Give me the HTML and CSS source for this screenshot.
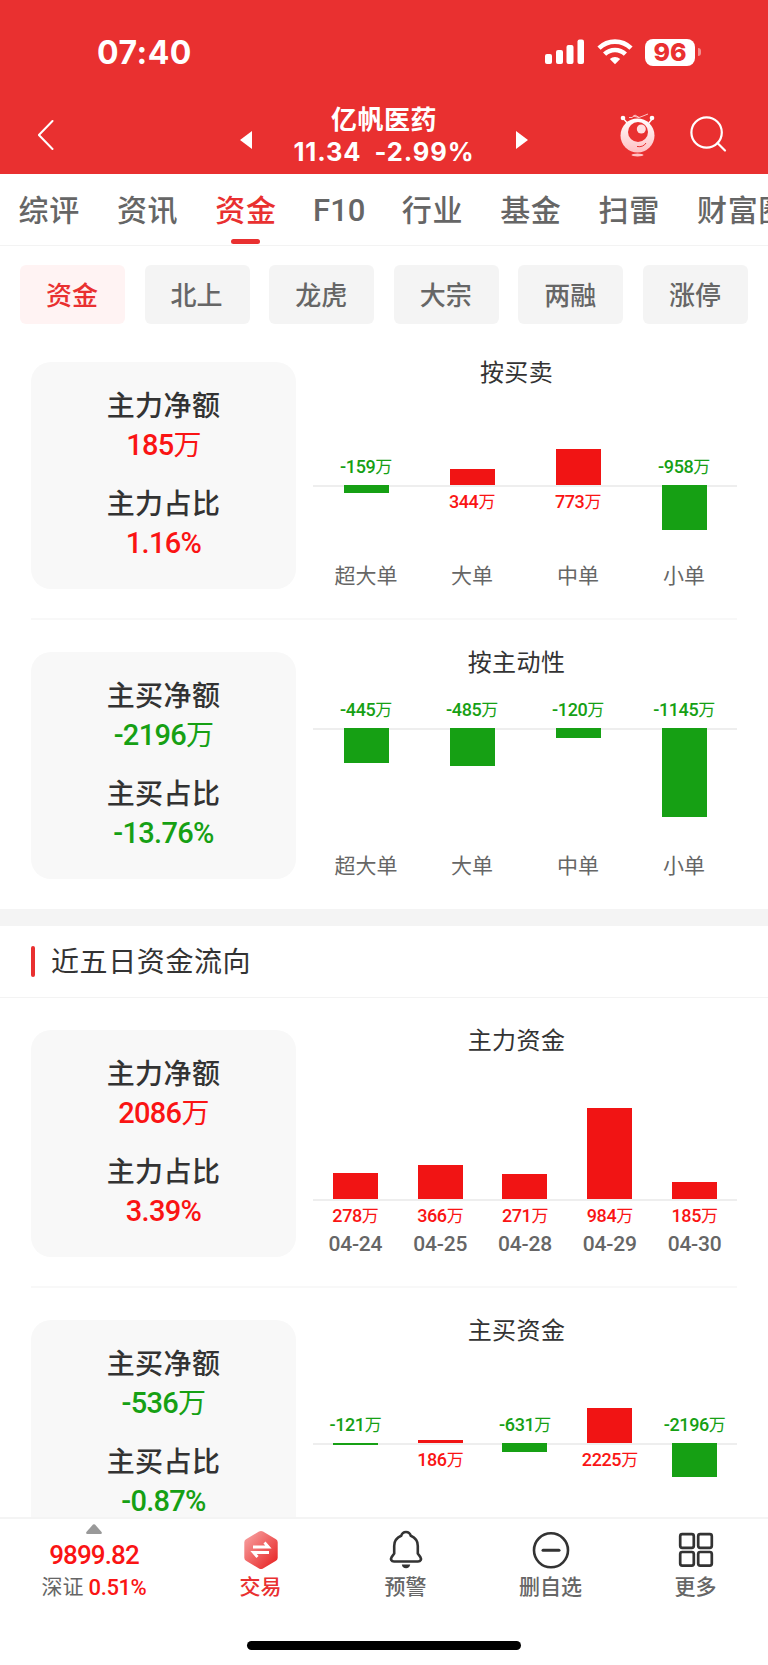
FILE: index.html
```
<!DOCTYPE html>
<html lang="zh-CN">
<head>
    <meta charset="UTF-8">
    <meta name="viewport" content="width=device-width, initial-scale=1.0">
    <title>亿帆医药 - 资金</title>
    <link rel="stylesheet" href="styles.css">
</head>
<body>
<div class="app">

    <header class="header">
        <div class="status">
            <span class="time">07:40</span>
            <div class="status-icons">
                <svg width="40" height="26" viewBox="0 0 40 26" fill="#fff">
                    <rect x="0" y="15" width="7" height="10" rx="2"/>
                    <rect x="11" y="11" width="7" height="14" rx="2"/>
                    <rect x="21.5" y="6" width="7" height="19" rx="2"/>
                    <rect x="32.5" y="0.5" width="6.5" height="24.5" rx="2"/>
                </svg>
                <svg class="wifi" width="36" height="26" viewBox="0 0 36 26" fill="none" stroke="#fff" stroke-width="4.6">
                    <path d="M2 9.2C11 .4 25 .4 34 9.2"/>
                    <path d="M7.6 15.2c5.8-5.6 15-5.6 20.8 0"/>
                    <path d="M12.8 20c3-2.8 7.4-2.8 10.4 0L18 25.2z" fill="#fff" stroke="none"/>
                </svg>
                <span class="battery">96</span>
                <span class="battery-tip"></span>
            </div>
        </div>
        <div class="nav">
            <svg class="back" width="18" height="32" viewBox="0 0 18 32" fill="none" stroke="#fff" stroke-width="2" stroke-linecap="round" stroke-linejoin="round"><path d="M14.5 2 .9 16 14.5 30"/></svg>
            <svg class="arrow" width="12" height="18" viewBox="0 0 12 18" fill="#fff"><path d="M12 0v18L0 9z"/></svg>
            <div class="stock">
                <h1>亿帆医药</h1>
                <p><span>11.34</span><span>-2.99%</span></p>
            </div>
            <svg class="arrow" width="12" height="18" viewBox="0 0 12 18" fill="#fff"><path d="M0 0v18l12-9z"/></svg>
            <svg class="robot" width="36" height="44" viewBox="0 0 36 44">
                <defs>
                    <linearGradient id="ball" x1="0" y1="0" x2="0" y2="1">
                        <stop offset="0" stop-color="#fff"/>
                        <stop offset="1" stop-color="#ffbfc2"/>
                    </linearGradient>
                </defs>
                <path d="M3 5l5 6M33 5l-5 6" stroke="#fff" stroke-width="1.3"/>
                <path d="M9 4.5h3l3-2.5 4 2.5 4-1.5 5-2M13 3l6 1.5" fill="none" stroke="#ffd5d6" stroke-width=".9"/>
                <circle cx="3" cy="5" r="2.3" fill="#fff"/>
                <circle cx="32" cy="5" r="2.3" fill="#fff"/>
                <circle cx="17.5" cy="22.5" r="17" fill="url(#ball)"/>
                <circle cx="18" cy="19" r="10" fill="#e93030"/>
                <circle cx="21.3" cy="16" r="4.5" fill="#ffdfe0"/>
                <path d="M17 33.5c4 .8 7.3-.6 9-3.5" fill="none" stroke="#e93030" stroke-width="1"/>
                <ellipse cx="17.5" cy="42" rx="6" ry="1.5" fill="#ffc3c5"/>
            </svg>
            <svg class="search" width="38" height="38" viewBox="0 0 38 38" fill="none" stroke="#fff" stroke-width="2.2" stroke-linecap="round"><circle cx="16.6" cy="16.5" r="15.2"/><path d="M27.5 27 35 34.5"/></svg>
        </div>
    </header>

    <nav class="tabs">
        <a>综评</a>
        <a>资讯</a>
        <a class="active">资金</a>
        <a class="latin">F10</a>
        <a>行业</a>
        <a>基金</a>
        <a>扫雷</a>
        <a>财富圈</a>
    </nav>

    <div class="pills">
        <a class="active">资金</a>
        <a>北上</a>
        <a>龙虎</a>
        <a>大宗</a>
        <a>两融</a>
        <a>涨停</a>
    </div>

    <main class="content">
        <section class="block">
            <div class="card">
                <h3>主力净额</h3>
                <p class="red">185<i>万</i></p>
                <h3>主力占比</h3>
                <p class="red">1.16%</p>
            </div>
            <div class="chart axis-mid">
                <h2>按买卖</h2>
                <div class="plot">
                    <div class="col green"><div class="up"><b>-159<i>万</i></b></div><div class="down"><span class="bar" style="height:7.5px"></span></div></div>
                    <div class="col red"><div class="up"><span class="bar" style="height:16px"></span></div><div class="down"><b>344<i>万</i></b></div></div>
                    <div class="col red"><div class="up"><span class="bar" style="height:36px"></span></div><div class="down"><b>773<i>万</i></b></div></div>
                    <div class="col green"><div class="up"><b>-958<i>万</i></b></div><div class="down"><span class="bar" style="height:44.5px"></span></div></div>
                </div>
                <div class="labels"><span>超大单</span><span>大单</span><span>中单</span><span>小单</span></div>
            </div>
        </section>

        <section class="block">
            <div class="card">
                <h3>主买净额</h3>
                <p class="green">-2196<i>万</i></p>
                <h3>主买占比</h3>
                <p class="green">-13.76%</p>
            </div>
            <div class="chart axis-top">
                <h2>按主动性</h2>
                <div class="plot">
                    <div class="col green"><div class="up"><b>-445<i>万</i></b></div><div class="down"><span class="bar" style="height:34.5px"></span></div></div>
                    <div class="col green"><div class="up"><b>-485<i>万</i></b></div><div class="down"><span class="bar" style="height:37.5px"></span></div></div>
                    <div class="col green"><div class="up"><b>-120<i>万</i></b></div><div class="down"><span class="bar" style="height:9.5px"></span></div></div>
                    <div class="col green"><div class="up"><b>-1145<i>万</i></b></div><div class="down"><span class="bar" style="height:88.5px"></span></div></div>
                </div>
                <div class="labels"><span>超大单</span><span>大单</span><span>中单</span><span>小单</span></div>
            </div>
        </section>

        <div class="section-title"><h2>近五日资金流向</h2></div>

        <section class="block">
            <div class="card">
                <h3>主力净额</h3>
                <p class="red">2086<i>万</i></p>
                <h3>主力占比</h3>
                <p class="red">3.39%</p>
            </div>
            <div class="chart axis-bottom">
                <h2>主力资金</h2>
                <div class="plot">
                    <div class="col red"><div class="up"><span class="bar" style="height:26px"></span></div><div class="down"><b>278<i>万</i></b></div></div>
                    <div class="col red"><div class="up"><span class="bar" style="height:34.5px"></span></div><div class="down"><b>366<i>万</i></b></div></div>
                    <div class="col red"><div class="up"><span class="bar" style="height:25.5px"></span></div><div class="down"><b>271<i>万</i></b></div></div>
                    <div class="col red"><div class="up"><span class="bar" style="height:91.5px"></span></div><div class="down"><b>984<i>万</i></b></div></div>
                    <div class="col red"><div class="up"><span class="bar" style="height:17.5px"></span></div><div class="down"><b>185<i>万</i></b></div></div>
                </div>
                <div class="labels dates"><span>04-24</span><span>04-25</span><span>04-28</span><span>04-29</span><span>04-30</span></div>
            </div>
        </section>

        <section class="block">
            <div class="card">
                <h3>主买净额</h3>
                <p class="green">-536<i>万</i></p>
                <h3>主买占比</h3>
                <p class="green">-0.87%</p>
            </div>
            <div class="chart axis-center">
                <h2>主买资金</h2>
                <div class="plot">
                    <div class="col green"><div class="up"><b>-121<i>万</i></b></div><div class="down"><span class="bar" style="height:2px"></span></div></div>
                    <div class="col red"><div class="up"><span class="bar" style="height:3px"></span></div><div class="down"><b>186<i>万</i></b></div></div>
                    <div class="col green"><div class="up"><b>-631<i>万</i></b></div><div class="down"><span class="bar" style="height:9.7px"></span></div></div>
                    <div class="col red"><div class="up"><span class="bar" style="height:34.7px"></span></div><div class="down"><b>2225<i>万</i></b></div></div>
                    <div class="col green"><div class="up"><b>-2196<i>万</i></b></div><div class="down"><span class="bar" style="height:34px"></span></div></div>
                </div>
            </div>
        </section>
    </main>

    <footer class="bottom">
        <div class="bottom-row">
            <div class="index">
                <svg width="16" height="10" viewBox="0 0 16 10" fill="#999"><path d="M7 .6q1-.9 2 0L15.6 8q.8 2-1 2H1.4q-1.8 0-1-2z"/></svg>
                <strong>9899.82</strong>
                <p>深证<em>0.51%</em></p>
            </div>
            <a class="trade">
                <svg width="40" height="40" viewBox="0 0 40 40">
                    <defs>
                        <linearGradient id="hex" x1="0" y1="0" x2="1" y2="1">
                            <stop offset="0" stop-color="#f8a9a9"/>
                            <stop offset="0.85" stop-color="#e93030"/>
                        </linearGradient>
                    </defs>
                    <path d="M18 1.6q2-1.2 4 0l13 7.6q1.7 1 1.7 3v15.6q0 2-1.7 3l-13 7.6q-2 1.2-4 0L5 30.8q-1.7-1-1.7-3V12.2q0-2 1.7-3z" fill="url(#hex)"/>
                    <path d="M12 17h15.5L23.5 12.500M28 22.500H12.500L16.500 27" fill="none" stroke="#fff" stroke-width="2.8"/>
                </svg>
                <span>交易</span>
            </a>
            <a>
                <svg width="40" height="40" viewBox="0 0 40 40" fill="none" stroke="#333" stroke-width="2.6" stroke-linejoin="round">
                    <path d="M20 2c-2.8 0-4.2 1.8-4.8 3.8C10.500 7.800 8.200 11.500 8.200 16v7.500L5.700 27c-1.500 2.500-.3 4.500 2.300 4.500h24c2.600 0 3.800-2 2.300-4.500l-2.500-3.500V16c0-4.500-2.300-8.200-7-10.200C24.200 3.800 22.800 2 20 2z"/>
                    <path d="M15.800 34.500h8.400c-.5 2.600-1.800 3.700-4.200 3.700s-3.700-1.100-4.200-3.700z" fill="#333" stroke="none"/>
                </svg>
                <span>预警</span>
            </a>
            <a>
                <svg width="40" height="40" viewBox="0 0 40 40" fill="none" stroke="#333" stroke-width="2.6" stroke-linecap="round"><circle cx="20" cy="20.3" r="17"/><path d="M12 20.3h16" stroke-width="3"/></svg>
                <span>删自选</span>
            </a>
            <a>
                <svg width="40" height="40" viewBox="0 0 40 40" fill="none" stroke="#333" stroke-width="2.7">
                    <rect x="4.2" y="4.2" width="13.6" height="13.6" rx="2"/>
                    <rect x="22.2" y="4.2" width="13.6" height="13.6" rx="2"/>
                    <rect x="4.2" y="22" width="13.6" height="13.6" rx="2"/>
                    <rect x="22.2" y="22" width="13.6" height="13.6" rx="2"/>
                </svg>
                <span>更多</span>
            </a>
        </div>
        <div class="home-bar"></div>
    </footer>

</div>
</body>
</html>
```
FILE: styles.css
```
* {
    box-sizing: border-box;
    margin: 0;
    padding: 0;
}
body {
    font-family: Roboto, "Noto Sans CJK SC", sans-serif;
    background-color: #fff;
    color: #333;
}
i, em {
    font-style: normal;
}
svg {
    display: block;
    flex-shrink: 0;
}
.red {
    color: #fa1414;
}
.green {
    color: #16a014;
}
.app {
    display: flex;
    flex-direction: column;
    width: 768px;
    height: 1665px;
    overflow: hidden;
}

/* header */
.header {
    flex: none;
    height: 174px;
    background-color: #e93030;
    color: #fff;
}
.status {
    display: flex;
    justify-content: space-between;
    align-items: center;
    height: 104px;
    padding: 0 67px 0 97px;
    font-family: Inter, sans-serif;
}
.time {
    font-size: 32px;
    font-weight: 700;
    letter-spacing: 0.5px;
}
.status-icons {
    display: flex;
    align-items: center;
}
.wifi {
    margin-left: 12px;
}
.battery {
    width: 50px;
    height: 27px;
    margin-left: 12px;
    border-radius: 8px;
    background-color: #fff;
    color: #e93030;
    font-size: 25px;
    font-weight: 800;
    line-height: 27px;
    text-align: center;
}
.battery-tip {
    width: 3px;
    height: 8px;
    margin-left: 3px;
    border-radius: 0 4px 4px 0;
    background-color: #f29090;
}
.nav {
    display: grid;
    grid-template-columns: 202px 12px 264px 12px 91px 71px 38px;
    height: 70px;
    padding-left: 38px;
}
.back {
    margin-top: 15px;
}
.arrow {
    margin-top: 27px;
}
.stock {
    text-align: center;
}
.stock h1 {
    font-size: 26px;
    font-weight: 700;
    line-height: 32px;
    letter-spacing: 0.5px;
}
.stock p {
    display: flex;
    justify-content: center;
    gap: 13px;
    font-family: Inter, sans-serif;
    font-size: 25.5px;
    font-weight: 700;
    line-height: 31px;
    letter-spacing: 0.9px;
}
.robot {
    grid-column: 6;
    margin: 9px 0 0 1px;
}
.search {
    grid-column: 7;
    margin-top: 12px;
}

/* tabs */
.tabs {
    display: flex;
    flex: none;
    gap: 37px;
    height: 72px;
    padding-left: 18.5px;
    border-bottom: 1px solid #f3f3f3;
    overflow: hidden;
}
.tabs a {
    display: flex;
    flex-direction: column;
    align-items: center;
    flex: none;
    color: #666;
    font-size: 30px;
    font-weight: 500;
    line-height: 74px;
    letter-spacing: 0.7px;
}
.tabs .latin {
    width: 51px;
    font-size: 31px;
    letter-spacing: 0;
}
.tabs .active {
    color: #e93030;
}
.tabs .active::after {
    content: "";
    width: 29px;
    height: 5px;
    margin: -9px 1px 0 0;
    border-radius: 3px;
    background-color: #e93030;
}
.pills {
    display: grid;
    flex: none;
    grid-template-columns: repeat(6, 105px);
    gap: 19.6px;
    padding: 19px 20px 28px;
}
.pills a {
    height: 59px;
    padding-right: 1px;
    border-radius: 6px;
    background-color: #f4f4f4;
    color: #666;
    font-size: 26px;
    font-weight: 500;
    line-height: 62px;
    text-align: center;
}
.pills .active {
    background-color: #fff3f3;
    color: #e93030;
}

/* content */
.content {
    flex: 1;
    min-height: 0;
    padding-top: 10px;
    overflow: hidden;
}
.block {
    display: flex;
    gap: 17px;
    height: 258px;
    margin: 0 31px 32px;
    border-bottom: 2px solid #f8f8f8;
}
.block:has(+ .section-title) {
    height: 257px;
    margin-bottom: 0;
    border: none;
}
.card {
    flex: none;
    width: 265px;
    height: 227px;
    padding-top: 26px;
    border-radius: 20px;
    background-color: #f8f8f8;
    text-align: center;
}
.card h3 {
    font-size: 28px;
    font-weight: 500;
    line-height: 38px;
    letter-spacing: 0.4px;
}
.card p {
    margin-bottom: 21px;
    font-size: 29px;
    font-weight: 500;
    line-height: 38px;
    letter-spacing: -0.7px;
}
.card i {
    font-size: 28px;
    font-weight: 400;
}

/* bar charts, --axis is the distance from the top of the plot to the zero line */
.chart {
    width: 424px;
}
.chart h2 {
    height: 36px;
    margin: -7px 0;
    padding-right: 17px;
    font-size: 24px;
    font-weight: 400;
    line-height: 36px;
    letter-spacing: 0.4px;
    text-align: center;
}
.axis-top {
    --axis: 54px;
}
.axis-mid {
    --axis: 101px;
}
.axis-center {
    --axis: 100.5px;
}
.axis-bottom {
    --axis: 147px;
}
.plot {
    display: flex;
    height: 176px;
}
.col {
    flex: 1;
}
.up, .down {
    display: flex;
    flex-direction: column;
    align-items: center;
}
.up {
    justify-content: flex-end;
    height: var(--axis);
}
.down {
    border-top: 2px solid #eee;
}
.bar {
    width: 45px;
}
.red .bar {
    background-color: #f11414;
}
.green .bar {
    margin-top: -2px;
    background-color: #16a014;
}
.col b {
    font-size: 18px;
    font-weight: 500;
    line-height: 22px;
    letter-spacing: -0.4px;
}
.up b {
    margin-bottom: 7px;
}
.down b {
    margin-top: 4px;
}
.col i {
    font-size: 17px;
    font-weight: 400;
}
.labels {
    display: flex;
    color: #666;
    font-size: 21px;
    line-height: 32px;
}
.labels span {
    flex: 1;
    text-align: center;
}
.dates span {
    font-weight: 500;
    letter-spacing: -0.2px;
}
.section-title {
    display: flex;
    align-items: center;
    height: 89px;
    margin-bottom: 32px;
    padding: 0 0 1px 31px;
    border-top: 17px solid #f4f4f4;
    border-bottom: 1px solid #f3f3f3;
}
.section-title::before {
    content: "";
    width: 4px;
    height: 31px;
    margin-right: 16px;
    border-radius: 2px;
    background-color: #e93030;
}
.section-title h2 {
    padding-bottom: 2px;
    font-size: 28px;
    font-weight: 400;
    letter-spacing: 0.6px;
}

/* bottom bar */
.bottom {
    flex: none;
    height: 148px;
    border-top: 2px solid #f4f4f4;
    background-color: #fff;
}
.bottom-row {
    display: grid;
    grid-template-columns: 188px repeat(4, 145px);
    height: 122px;
}
.bottom-row a, .index {
    display: flex;
    flex-direction: column;
    align-items: center;
}
.bottom-row a {
    padding-top: 11px;
    color: #666;
    font-size: 21px;
    font-weight: 500;
    line-height: 34px;
}
.bottom-row .trade {
    color: #e93030;
}
.index {
    padding-top: 5px;
    color: #fa1414;
}
.index strong {
    margin-top: 6px;
    font-size: 26px;
    font-weight: 500;
    line-height: 31px;
    letter-spacing: -0.9px;
}
.index p {
    display: flex;
    gap: 5px;
    color: #666;
    font-size: 21px;
    line-height: 33px;
}
.index em {
    color: #fa1414;
    font-size: 22px;
    font-weight: 500;
    letter-spacing: -0.4px;
}
.home-bar {
    width: 274px;
    height: 9px;
    margin: 0 auto;
    border-radius: 5px;
    background-color: #000;
}
```
